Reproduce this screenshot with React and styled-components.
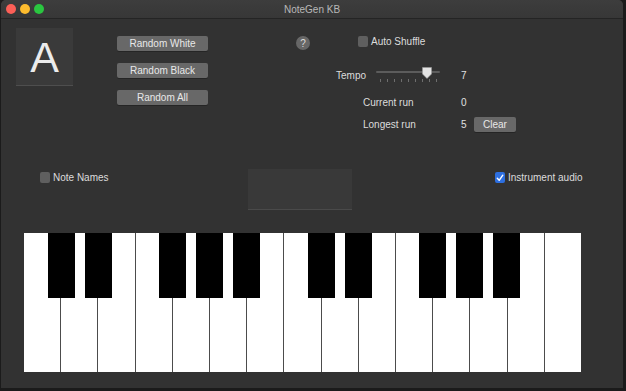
import React from 'react';
import styled, { createGlobalStyle } from 'styled-components';

const GlobalStyle = createGlobalStyle`
  html, body {
    margin: 0;
    padding: 0;
    background: #1b1b1b;
  }
  body {
    width: 626px;
    height: 391px;
    overflow: hidden;
    font-family: "Liberation Sans", Helvetica, Arial, sans-serif;
  }
`

const WHITE_KEYS = 15;
// black keys sit on these white-key boundaries
const BLACK_KEYS = [1, 2, 4, 5, 6, 8, 9, 11, 12, 13];

export default function App() {
  return (
    <>
      <GlobalStyle />
      <Window>
        <TitleBar>
          <Lights>
            <Light $color='#fc5f57' />
            <Light $color='#fdbc2e' />
            <Light $color='#2ac640' />
          </Lights>
          <Title>NoteGen KB</Title>
          <span />
        </TitleBar>

        <Top>
          <NoteBox>A</NoteBox>
          <ButtonColumn>
            <Button type='button'>Random White</Button>
            <Button type='button'>Random Black</Button>
            <Button type='button'>Random All</Button>
          </ButtonColumn>
          <HelpButton type='button'>?</HelpButton>
          <Panel>
            <PanelRow $top={5} $indent={22}>
              <Check />
              <Label>Auto Shuffle</Label>
            </PanelRow>
            <PanelRow $top={18}>
              <Label $width={38}>Tempo</Label>
              <TempoSlider />
              <Value $left={19}>7</Value>
            </PanelRow>
            <PanelRow $top={11} $indent={27}>
              <Label $width={98}>Current run</Label>
              <Value>0</Value>
            </PanelRow>
            <PanelRow $top={6} $indent={27}>
              <Label $width={98}>Longest run</Label>
              <Value>5</Value>
              <ClearButton type='button'>Clear</ClearButton>
            </PanelRow>
          </Panel>
        </Top>

        <Middle>
          <Option $width={208}>
            <Check />
            <Label>Note Names</Label>
          </Option>
          <Display />
          <Option $left={143}>
            <Check $checked>
              <svg width='8' height='8' viewBox='0 0 8 8'>
                <path d='M1.3 4.2 L3.2 6.3 L6.8 1.2' fill='none' stroke='#fff' strokeWidth='1.4' strokeLinecap='round' strokeLinejoin='round' />
              </svg>
            </Check>
            <Label>Instrument audio</Label>
          </Option>
        </Middle>

        <Keyboard>
          {Array.from({ length: WHITE_KEYS }).map((_, i) => (
            <WhiteKey key={i} $last={i === WHITE_KEYS - 1} />
          ))}
          {BLACK_KEYS.map((b) => (
            <BlackKey key={b} $at={b} />
          ))}
        </Keyboard>
      </Window>
    </>
  )
}

function TempoSlider() {
  const ticks = Array.from({ length: 9 }).map((_, i) => 6 + i * 7);
  return (
    <svg width='68' height='16' viewBox='0 0 68 16'>
      <rect x='2' y='4' width='64' height='2' rx='1' fill='#5c5c5c' />
      {ticks.map((x) => (
        <rect key={x} x={x} y='12' width='1' height='3' fill='#6e6e6e' />
      ))}
      <path d='M48.5 0.5 H57.5 V7 L53 11.5 L48.5 7 Z' fill='#e4e4e4' stroke='#9a9a9a' strokeWidth='0.6' />
    </svg>
  )
}

const Window = styled.div`
  display: flex;
  flex-direction: column;
  margin-left: 1px;
  width: 622px;
  height: 388px;
  border-radius: 5px 5px 0 0;
  background-color: #323232;
  color: #dedede;
  font-size: 10px;
  overflow: hidden;
`
const TitleBar = styled.div`
  display: grid;
  grid-template-columns: 1fr auto 1fr;
  align-items: center;
  height: 18px;
  border-bottom: 1px solid #242424;
  background: linear-gradient(#3d3d3d, #373737);
`
const Lights = styled.div`
  display: flex;
  gap: 4px;
  padding-left: 5px;
`
const Light = styled.span`
  width: 10px;
  height: 10px;
  border-radius: 50%;
  background-color: ${p => p.$color};
`
const Title = styled.div`
  color: #b8b8b8;
  font-size: 10px;
`
const Top = styled.div`
  display: flex;
  align-items: flex-start;
  padding: 9px 0 0 15px;
`
const NoteBox = styled.div`
  display: flex;
  align-items: center;
  justify-content: center;
  box-sizing: border-box;
  width: 57px;
  height: 58px;
  border-bottom: 1px solid #4e4e4e;
  background-color: #3a3a3a;
  color: #ececec;
  font-size: 43px;
  font-weight: 300;
  padding-top: 2px;
`
const ButtonColumn = styled.div`
  display: flex;
  flex-direction: column;
  gap: 12px;
  margin: 8px 0 0 44px;
  width: 91px;
`
const Button = styled.button`
  height: 15px;
  padding: 0;
  border: none;
  border-radius: 2px;
  background-color: #686868;
  color: #e8e8e8;
  font-family: inherit;
  font-size: 10px;
  box-shadow: 0 1px 0 rgba(0, 0, 0, 0.25);
`
const HelpButton = styled.button`
  display: flex;
  align-items: center;
  justify-content: center;
  margin: 8px 0 0 88px;
  width: 14px;
  height: 14px;
  padding: 0;
  border: none;
  border-radius: 50%;
  background-color: #676767;
  color: #dcdcdc;
  font-family: inherit;
  font-size: 10px;
`
const Panel = styled.div`
  display: flex;
  flex-direction: column;
  margin-left: 26px;
`
const PanelRow = styled.div`
  display: flex;
  align-items: center;
  height: 16px;
  margin-top: ${p => p.$top || 0}px;
  padding-left: ${p => p.$indent || 0}px;
`
const Label = styled.span`
  width: ${p => (p.$width ? `${p.$width}px` : 'auto')};
  color: #dcdcdc;
  font-size: 10px;
  white-space: nowrap;
`
const Value = styled.span`
  margin-left: ${p => p.$left || 0}px;
  width: 6px;
  color: #e0e0e0;
  font-size: 10px;
`
const ClearButton = styled(Button)`
  margin-left: 7px;
  width: 42px;
`
const Check = styled.span`
  display: flex;
  align-items: center;
  justify-content: center;
  flex-shrink: 0;
  width: 10px;
  height: 11px;
  margin-right: 3px;
  border-radius: 2px;
  background-color: ${p => (p.$checked ? '#2d6fe0' : '#5f5f5f')};
`
const Middle = styled.div`
  display: flex;
  align-items: flex-start;
  margin-top: 37px;
  padding-left: 39px;
`
const Option = styled.div`
  display: flex;
  align-items: center;
  width: ${p => (p.$width ? `${p.$width}px` : 'auto')};
  margin: 3px 0 0 ${p => p.$left || 0}px;
`
const Display = styled.div`
  box-sizing: border-box;
  width: 104px;
  height: 41px;
  border-bottom: 1px solid #4a4a4a;
  background-color: #393939;
`
const Keyboard = styled.div`
  position: relative;
  display: flex;
  margin: 23px 0 0 23px;
  width: 557px;
  height: 139px;
  background-color: #fff;
`
const WhiteKey = styled.div`
  flex: 1;
  border-right: ${p => (p.$last ? 'none' : '1px solid #4c4c4c')};
  background-color: #fff;
`
const BlackKey = styled.div`
  position: absolute;
  top: 0;
  left: calc(${p => p.$at} * 100% / 15 - 13.5px);
  width: 27px;
  height: 65px;
  background-color: #000;
`
